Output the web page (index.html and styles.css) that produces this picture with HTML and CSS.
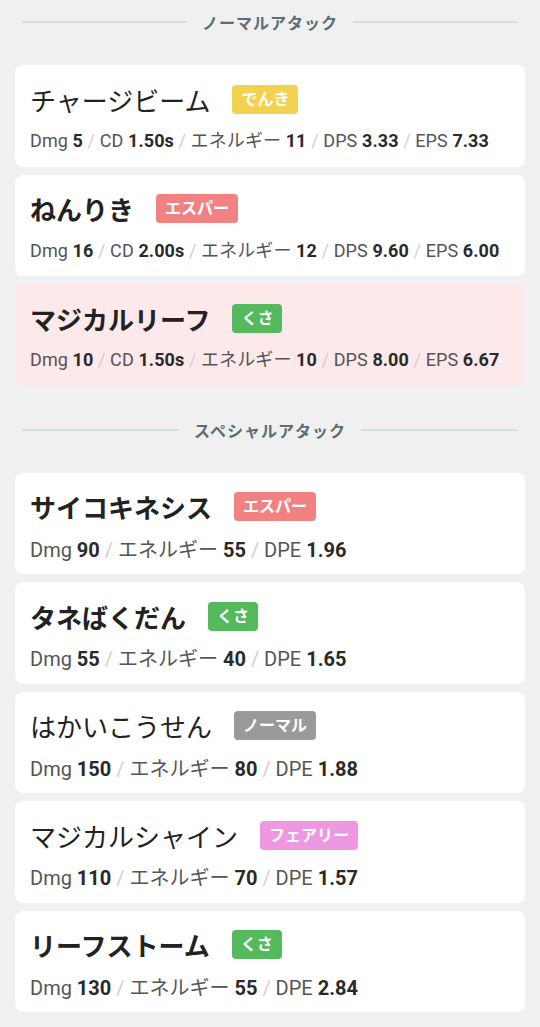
FILE: index.html
```html
<!DOCTYPE html>
<html lang="ja">
<head>
    <meta charset="UTF-8">
    <meta name="viewport" content="width=device-width, initial-scale=1.0">
    <title>わざ一覧</title>
    <link rel="stylesheet" href="styles.css">
</head>
<body>
    <div class="container">
        <h2 class="section-title"><span>ノーマルアタック</span></h2>
        <div class="move-list">
            <div class="move">
                <div class="move-head">
                    <span class="move-name">チャージビーム</span>
                    <span class="type type-denki">でんき</span>
                </div>
                <div class="stats">Dmg <b>5</b> <i>/</i> CD <b>1.50s</b> <i>/</i> エネルギー <b>11</b> <i>/</i> DPS <b>3.33</b> <i>/</i> EPS <b>7.33</b></div>
            </div>
            <div class="move">
                <div class="move-head">
                    <span class="move-name bold">ねんりき</span>
                    <span class="type type-esper">エスパー</span>
                </div>
                <div class="stats">Dmg <b>16</b> <i>/</i> CD <b>2.00s</b> <i>/</i> エネルギー <b>12</b> <i>/</i> DPS <b>9.60</b> <i>/</i> EPS <b>6.00</b></div>
            </div>
            <div class="move highlight">
                <div class="move-head">
                    <span class="move-name bold">マジカルリーフ</span>
                    <span class="type type-kusa">くさ</span>
                </div>
                <div class="stats">Dmg <b>10</b> <i>/</i> CD <b>1.50s</b> <i>/</i> エネルギー <b>10</b> <i>/</i> DPS <b>8.00</b> <i>/</i> EPS <b>6.67</b></div>
            </div>
        </div>

        <h2 class="section-title"><span>スペシャルアタック</span></h2>
        <div class="move-list">
            <div class="move">
                <div class="move-head">
                    <span class="move-name bold">サイコキネシス</span>
                    <span class="type type-esper">エスパー</span>
                </div>
                <div class="stats big">Dmg <b>90</b> <i>/</i> エネルギー <b>55</b> <i>/</i> DPE <b>1.96</b></div>
            </div>
            <div class="move">
                <div class="move-head">
                    <span class="move-name bold">タネばくだん</span>
                    <span class="type type-kusa">くさ</span>
                </div>
                <div class="stats big">Dmg <b>55</b> <i>/</i> エネルギー <b>40</b> <i>/</i> DPE <b>1.65</b></div>
            </div>
            <div class="move">
                <div class="move-head">
                    <span class="move-name">はかいこうせん</span>
                    <span class="type type-normal">ノーマル</span>
                </div>
                <div class="stats big">Dmg <b>150</b> <i>/</i> エネルギー <b>80</b> <i>/</i> DPE <b>1.88</b></div>
            </div>
            <div class="move">
                <div class="move-head">
                    <span class="move-name">マジカルシャイン</span>
                    <span class="type type-fairy">フェアリー</span>
                </div>
                <div class="stats big">Dmg <b>110</b> <i>/</i> エネルギー <b>70</b> <i>/</i> DPE <b>1.57</b></div>
            </div>
            <div class="move">
                <div class="move-head">
                    <span class="move-name bold">リーフストーム</span>
                    <span class="type type-kusa">くさ</span>
                </div>
                <div class="stats big">Dmg <b>130</b> <i>/</i> エネルギー <b>55</b> <i>/</i> DPE <b>2.84</b></div>
            </div>
        </div>
    </div>
</body>
</html>
```

FILE: styles.css
```css
body {
    font-family: 'Roboto', 'Noto Sans CJK JP', sans-serif;
    background-color: #f0f0f0;
    margin: 0;
    padding: 0;
    color: #222;
}

.container {
    padding: 0 15px;
}

.section-title {
    display: flex;
    align-items: center;
    gap: 15px;
    margin: 0;
    padding: 10px 7px 0;
    height: 24px;
    font-size: 16px;
    font-weight: bold;
    color: #5b6d76;
    letter-spacing: 1px;
}

.section-title::before,
.section-title::after {
    content: "";
    flex: 1;
    height: 2px;
    background-color: #d6dee1;
}

.move-list {
    display: flex;
    flex-direction: column;
    gap: 8px;
    margin: 31px 0 22px;
}

.move {
    background-color: #fff;
    border-radius: 8px;
    padding: 16px 15px 14px;
    height: 71.5px;
}

.move.highlight {
    background-color: #fde8ea;
}

.move-head {
    display: flex;
    align-items: center;
    gap: 22px;
    height: 36px;
}

.move-name {
    font-size: 26px;
    font-weight: normal;
    color: #222;
}

.move-name.bold {
    font-weight: bold;
}

.type {
    padding: 0 9px;
    border-radius: 4px;
    color: #fff;
    font-size: 16px;
    font-weight: bold;
    line-height: 29px;
}

.type-denki { background-color: #f2d24e; }
.type-esper { background-color: #f28282; }
.type-kusa { background-color: #55b95d; }
.type-normal { background-color: #9a9a9a; }
.type-fairy { background-color: #ef98e2; }

.stats {
    margin-top: 9px;
    font-size: 18px;
    letter-spacing: 0.1px;
    color: #555;
    white-space: nowrap;
}

.stats.big {
    font-size: 20px;
    letter-spacing: 0;
}

.stats b {
    color: #2a2a2a;
}

.stats i {
    font-style: normal;
    color: #d0d0d0;
}
```
